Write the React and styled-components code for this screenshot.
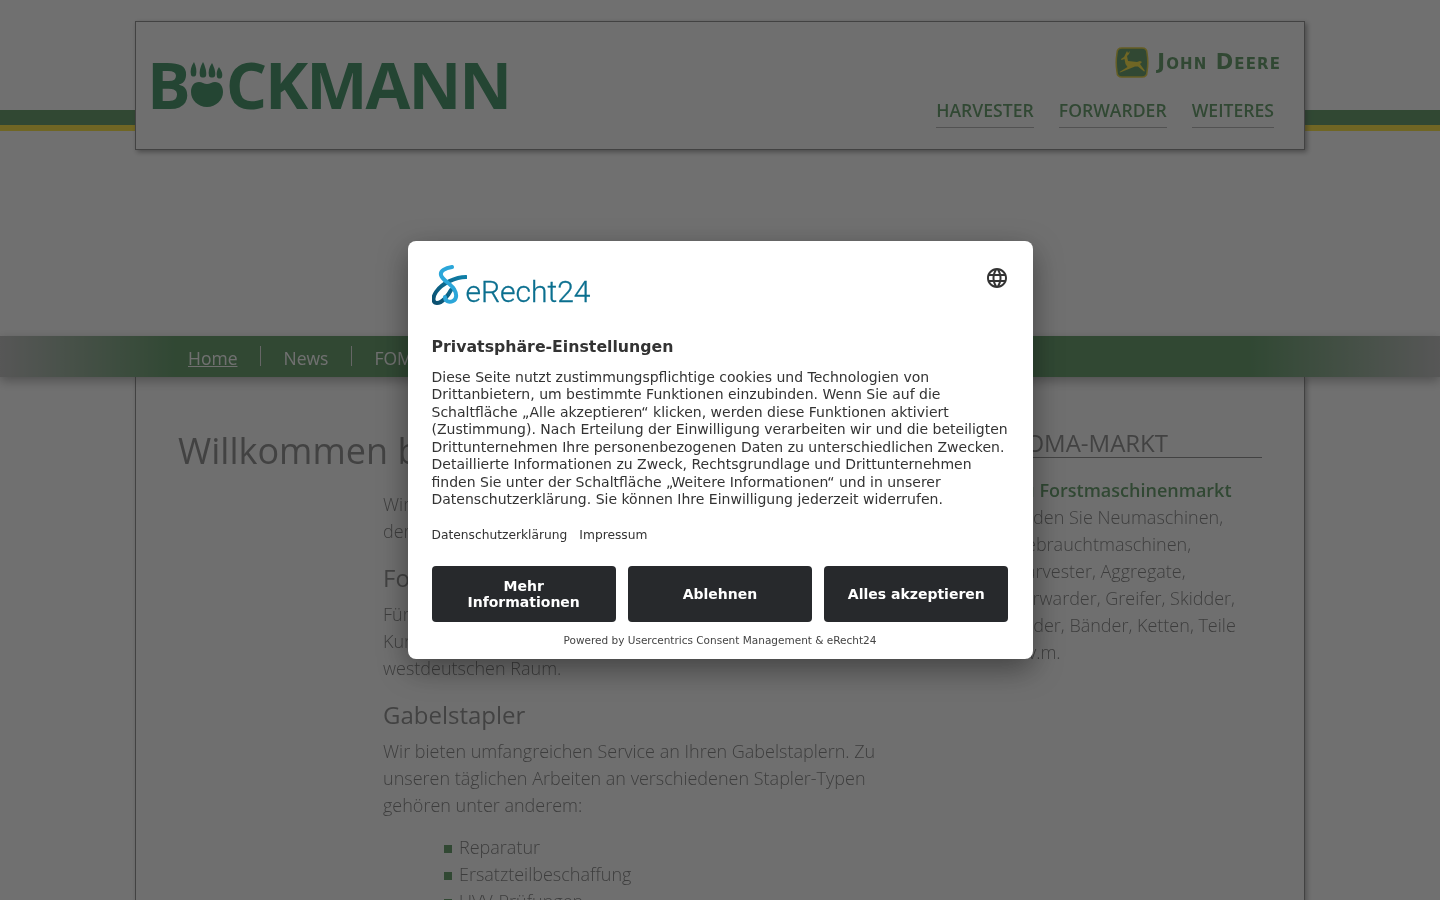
import React from "react";
import styled, { createGlobalStyle } from "styled-components";
import { MdLanguage } from "react-icons/md";

const GlobalStyle = createGlobalStyle`
	html, body {
		margin: 0;
		height: 100%;
		overflow: hidden;
		background: #fff;
		font-family: "Open Sans", sans-serif;
		color: #555;
	}
`;

const Page = styled.div`
	height: 900px;
	overflow: hidden;
	will-change: transform;
`;

const HeaderBand = styled.header`
	height: 150px;
	padding-top: 21px;
	box-sizing: border-box;
	background: linear-gradient(
		to bottom,
		transparent 110px,
		#2c7a35 110px,
		#2c7a35 125px,
		#ffde00 125px,
		#ffde00 131px,
		transparent 131px
	);
`;

const HeaderBox = styled.div`
	width: 1170px;
	height: 129px;
	margin: 0 auto;
	box-sizing: border-box;
	padding: 25px 23px 0 11px;
	display: flex;
	justify-content: space-between;
	background: #fbfbfb;
	border: 1px solid #666;
	box-shadow: 2px 2px 5px rgba(0, 0, 0, 0.5);
`;

const Logo = styled.a`
	display: flex;
	align-items: center;
	height: 74px;
	font-size: 65px;
	font-weight: 700;
	color: #007033;
	letter-spacing: -2px;
	line-height: 1;
`;

const Paw = styled.svg`
	width: 34px;
	height: 46px;
	margin: 2px 2px 0 1px;
`;

const HeaderRight = styled.div`
	display: flex;
	flex-direction: column;
	align-items: flex-end;
`;

const Brand = styled.div`
	display: flex;
	align-items: center;
	gap: 8px;
	height: 30px;
`;

const BrandName = styled.span`
	font-family: "DejaVu Sans", sans-serif;
	font-variant: small-caps;
	font-weight: 700;
	font-size: 21px;
	letter-spacing: 1.1px;
	color: #2c7a35;
`;

const TopNav = styled.nav`
	display: flex;
	gap: 25px;
	margin-top: 21px;
	padding-right: 7px;
`;

const TopLink = styled.a`
	font-size: 17.6px;
	font-weight: 600;
	line-height: 25px;
	color: #2c7a35;
	padding-bottom: 4px;
	border-bottom: 1px solid #999;
`;

const NavBar = styled.nav`
	margin-top: 186px;
	height: 41px;
	padding-left: 188px;
	display: flex;
	align-items: center;
	position: relative;
	z-index: 1;
	background: linear-gradient(
		to right,
		#aaa 0,
		#2c7a35 175px,
		#2c7a35 1250px,
		#aaa 100%
	);
	box-shadow: 0 4px 10px rgba(0, 0, 0, 0.4);
`;

const NavItem = styled.a`
	font-size: 17.5px;
	line-height: 24px;
	color: #fff;
	text-decoration: ${(p) => (p.$active ? "underline" : "none")};
	box-sizing: border-box;
	height: 20px;
	padding: 4px 23px 0 0;
	margin: -1px 22px 0 0;
	border-right: ${(p) => (p.$last ? "none" : "1px solid #ddd")};
	display: flex;
	align-items: center;
`;

const Panel = styled.main`
	width: 1170px;
	height: 600px;
	margin: 0 auto;
	box-sizing: border-box;
	padding: 49px 42px 0 42px;
	display: flex;
	justify-content: space-between;
	background: #fbfbfb;
	border: 1px solid #666;
	border-width: 0 1px;
	box-shadow: 2px 0 5px rgba(0, 0, 0, 0.4);
`;

const MainCol = styled.section`
	width: 702px;
`;

const Title = styled.h1`
	margin: 0 0 15px;
	font-size: 36px;
	line-height: 50px;
	font-weight: 400;
	color: #666;
`;

const TextCol = styled.div`
	margin-left: 205px;
	width: 497px;
`;

const Text = styled.p`
	margin: 0;
	font-size: 18px;
	font-weight: 300;
	line-height: 27px;
`;

const SubTitle = styled.h2`
	margin: 16px 0 7px;
	font-size: 24px;
	line-height: 33px;
	font-weight: 400;
	color: #666;
`;

const List = styled.ul`
	list-style: none;
	margin: 15px 0 0;
	padding: 0 0 0 61px;
`;

const ListItem = styled.li`
	display: flex;
	align-items: center;
	gap: 7px;
	font-size: 18px;
	font-weight: 300;
	line-height: 27px;

	&::before {
		content: "";
		width: 8px;
		height: 8px;
		margin-top: 3px;
		background: #2c7a35;
	}
`;

const Aside = styled.aside`
	width: 249px;
`;

const AsideTitle = styled.h2`
	margin: 3px 0 19px;
	font-size: 24px;
	line-height: 28px;
	font-weight: 400;
	color: #666;
	border-bottom: 1px solid #666;
`;

const MarketName = styled.strong`
	display: block;
	font-size: 18px;
	font-weight: 600;
	line-height: 27px;
	color: #2c7a35;
`;

const Overlay = styled.div`
	position: fixed;
	inset: 0;
	display: flex;
	align-items: center;
	justify-content: center;
	z-index: 10;
	background: rgba(51, 51, 51, 0.7);
`;

const Modal = styled.div`
	width: 625px;
	height: 418px;
	box-sizing: border-box;
	padding: 24px;
	background: #fff;
	border-radius: 8px;
	box-shadow: 0 10px 30px rgba(0, 0, 0, 0.4);
	font-family: "DejaVu Sans", sans-serif;
	color: #333;
`;

const ModalTop = styled.div`
	display: flex;
	justify-content: space-between;
	align-items: flex-start;
	height: 40px;
`;

const CmpLogo = styled.div`
	display: flex;
	align-items: flex-end;
	height: 40px;
`;

const CmpSymbol = styled.svg`
	width: 35px;
	height: 40px;
`;

const CmpName = styled.span`
	font-family: "Roboto", sans-serif;
	font-weight: 300;
	font-size: 30px;
	line-height: 30px;
	color: #0b6f8f;
	margin: 0 0 -2px -1px;
	-webkit-text-stroke: 0.3px #0b6f8f;
`;

const LangButton = styled.button`
	border: 0;
	padding: 0;
	margin: 1px 0 0 0;
	background: none;
	color: #333;
	display: flex;
`;

const ModalTitle = styled.h2`
	margin: 32px 0 0;
	font-size: 15.75px;
	line-height: 20px;
	font-weight: 700;
`;

const ModalBody = styled.p`
	margin: 11.5px 0 0;
	font-size: 14px;
	line-height: 17.5px;
`;

const ModalLinks = styled.div`
	display: flex;
	gap: 12px;
	margin-top: 17px;
	font-size: 12.25px;
	line-height: 18px;
`;

const ButtonRow = styled.div`
	display: grid;
	grid-template-columns: repeat(3, 1fr);
	gap: 12px;
	margin-top: 22px;
`;

const ConsentButton = styled.button`
	height: 56px;
	padding: 0 16px;
	border: 0;
	border-radius: 4px;
	background: #27292c;
	color: #fff;
	font-family: "DejaVu Sans", sans-serif;
	font-size: 14px;
	font-weight: 700;
	line-height: 16px;
`;

const Powered = styled.div`
	margin-top: 11px;
	text-align: center;
	font-size: 10.5px;
	line-height: 14px;
	color: #444;
`;

const App = () => (
	<>
		<GlobalStyle />
		<Page>
			<HeaderBand>
				<HeaderBox>
					<Logo>
						B
						<Paw viewBox="0 0 34 46">
							<g fill="currentColor">
								<path d="M4 0C1 4 0 9 1 13c1 2 4 2 5 0 1-4 0-9-2-13z" />
								<path d="M13 0c-3 5-4 10-3 14 1 2 5 2 6 0 1-4-1-10-3-14z" />
								<path d="M22 1c-3 4-4 9-3 13 1 2 5 2 6 0 1-4-1-9-3-13z" />
								<path d="M29 5c-2 3-3 6-2 10 1 2 4 2 5 0 1-4-1-7-3-10z" />
								<path d="M1 30c0-6 3-10 8-10 3 0 5 2 8 2s5-2 8-2c5 0 8 4 8 10 0 8-7 15-16 15S1 38 1 30z" />
							</g>
						</Paw>
						CKMANN
					</Logo>
					<HeaderRight>
						<Brand>
							<svg width="34" height="31" viewBox="0 0 34 31">
								<path d="M7 1h20c3 0 5 2 5 5 1 6 1 13 0 19 0 3-2 5-5 5H7c-3 0-5-2-5-5-1-6-1-13 0-19 0-3 2-5 5-5z" fill="#2c7a35" stroke="#d8c000" strokeWidth="1.5" />
								<path d="M12 4l1 2 2-2-1 3-2 2 1 5 9 1 3-1 2 1-2 2 5 7-1 .5-6-5-3 0-5 2-10 4-.5-.5 8-5-2-3-1-5-3 1-.5-1 3-2z" fill="#ffde00" />
							</svg>
							<BrandName>John Deere</BrandName>
						</Brand>
						<TopNav>
							<TopLink>HARVESTER</TopLink>
							<TopLink>FORWARDER</TopLink>
							<TopLink>WEITERES</TopLink>
						</TopNav>
					</HeaderRight>
				</HeaderBox>
			</HeaderBand>
			<NavBar>
				<NavItem $active>Home</NavItem>
				<NavItem>News</NavItem>
				<NavItem $last>FOMA-Markt</NavItem>
			</NavBar>
			<Panel>
				<MainCol>
					<Title>Willkommen bei Böckmann</Title>
					<TextCol>
						<Text>
							Wir sind Ihr Partner für Forstmaschinen und Gabelstapler in
							der Region.
						</Text>
						<SubTitle>Forstmaschinen</SubTitle>
						<Text>
							Für unsere Kunden sind wir als Servicepartner im Einsatz.
							<br />
							Kunden kommen aus dem gesamten nord- und
							<br />
							westdeutschen Raum.
						</Text>
						<SubTitle>Gabelstapler</SubTitle>
						<Text>
							Wir bieten umfangreichen Service an Ihren Gabelstaplern. Zu
							unseren täglichen Arbeiten an verschiedenen Stapler-Typen
							gehören unter anderem:
						</Text>
						<List>
							<ListItem>Reparatur</ListItem>
							<ListItem>Ersatzteilbeschaffung</ListItem>
							<ListItem>UVV-Prüfungen</ListItem>
						</List>
					</TextCol>
				</MainCol>
				<Aside>
					<AsideTitle>FOMA-MARKT</AsideTitle>
					<MarketName>Zu Forstmaschinenmarkt</MarketName>
					<Text>
						finden Sie Neumaschinen,
						<br />
						Gebrauchtmaschinen,
						<br />
						Harvester, Aggregate,
						<br />
						Forwarder, Greifer, Skidder,
						<br />
						Räder, Bänder, Ketten, Teile
						<br />
						u.v.m.
					</Text>
				</Aside>
			</Panel>
		</Page>
		<Overlay>
			<Modal>
				<ModalTop>
					<CmpLogo>
						<CmpSymbol viewBox="0 0 35 40">
							<defs>
								<linearGradient id="cmpGrad" x1="0" y1="1" x2="1" y2="0">
									<stop offset="0" stopColor="#0b4f6f" />
									<stop offset="1" stopColor="#0f7fa8" />
								</linearGradient>
							</defs>
							<path d="M34 12C24 12 10 18 4 27c-4 6-3 11 1 11 5 0 11-7 14-13" fill="none" stroke="url(#cmpGrad)" strokeWidth="4" strokeLinecap="round" />
							<path d="M20 2C13 3 8 6 9 10c1 5 9 8 13 14 3 5 3 10-1 12-4 2-8 0-8-4" fill="none" stroke="#2ba6d9" strokeWidth="4" strokeLinecap="round" />
						</CmpSymbol>
						<CmpName>eRecht24</CmpName>
					</CmpLogo>
					<LangButton aria-label="Sprache">
						<MdLanguage size={24} />
					</LangButton>
				</ModalTop>
				<ModalTitle>Privatsphäre-Einstellungen</ModalTitle>
				<ModalBody>
					Diese Seite nutzt zustimmungspflichtige cookies und Technologien von
					Drittanbietern, um bestimmte Funktionen einzubinden. Wenn Sie auf die
					Schaltfläche „Alle akzeptieren“ klicken, werden diese Funktionen
					aktiviert (Zustimmung). Nach Erteilung der Einwilligung verarbeiten
					wir und die beteiligten Drittunternehmen Ihre personenbezogenen Daten
					zu unterschiedlichen Zwecken. Detaillierte Informationen zu Zweck,
					Rechtsgrundlage und Drittunternehmen finden Sie unter der Schaltfläche
					„Weitere Informationen“ und in unserer Datenschutzerklärung. Sie
					können Ihre Einwilligung jederzeit widerrufen.
				</ModalBody>
				<ModalLinks>
					<span>Datenschutzerklärung</span>
					<span>Impressum</span>
				</ModalLinks>
				<ButtonRow>
					<ConsentButton>Mehr Informationen</ConsentButton>
					<ConsentButton>Ablehnen</ConsentButton>
					<ConsentButton>Alles akzeptieren</ConsentButton>
				</ButtonRow>
				<Powered>Powered by Usercentrics Consent Management &amp; eRecht24</Powered>
			</Modal>
		</Overlay>
	</>
);

export default App;
